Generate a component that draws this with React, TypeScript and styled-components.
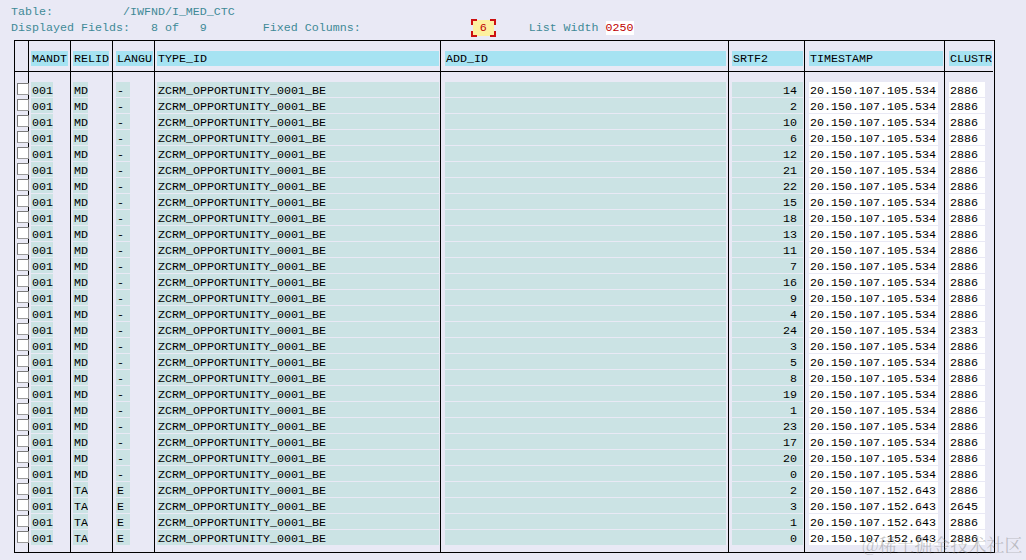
import React from "react";
import styled, { createGlobalStyle } from "styled-components";

const Global = createGlobalStyle`
  html, body { margin: 0; padding: 0; background: #e9e9f5; }
  body { font-family: "Liberation Mono", "DejaVu Sans Mono", monospace; }
`;

const Page = styled.div`
  position: relative;
  width: 1026px;
  height: 560px;
  overflow: hidden;
  background: #e9e9f5;
`;

const Info = styled.div`
  padding: 4px 0 0 11px;
  height: 37px;
  box-sizing: border-box;
  font-size: 11.67px;
  color: #3f8997;
`;

const InfoLine = styled.div`
  height: 16px;
  line-height: 16px;
  white-space: pre;
  display: flex;
  align-items: center;
`;

const FixedBox = styled.span`
  position: relative;
  display: inline-block;
  width: 21px;
  height: 16px;
  line-height: 17px;
  background: #fdf0a0;
  color: #c00000;
  text-align: center;
`;

const Brackets = styled.svg`
  position: absolute;
  left: -2px;
  top: -1px;
  width: 25px;
  height: 18px;
  overflow: visible;
  pointer-events: none;
`;

const WidthValue = styled.span`
  background: #ffffff;
  color: #c00000;
  height: 14px;
  line-height: 15px;
`;

const Table = styled.div`
  margin-left: 14px;
  margin-top: 3px;
  width: 981px;
  height: 513px;
  box-sizing: border-box;
  border: 1px solid #000;
  display: flex;
`;

const Column = styled.div<{ $w: number; $last?: boolean }>`
  width: ${(p) => p.$w}px;
  flex: none;
  display: flex;
  flex-direction: column;
  border-right: ${(p) => (p.$last ? "none" : "1px solid #000")};
  font-size: 11.67px;
  color: #000;
`;

const HeadArea = styled.div<{ $pad: number }>`
  height: 31px;
  padding: 10px 0 0 ${(p) => p.$pad}px;
  box-sizing: border-box;
  border-bottom: 1px solid #000;
`;

const HeadCell = styled.div<{ $w: number }>`
  width: ${(p) => p.$w}px;
  height: 15px;
  line-height: 13px;
  padding: 2px 0 0 1px;
  background: #a6e3f2;
  box-sizing: border-box;
  white-space: pre;
  overflow: hidden;
`;

const BodyArea = styled.div<{ $pad: number }>`
  padding: 10px 0 0 ${(p) => p.$pad}px;
  display: flex;
  flex-direction: column;
  gap: 1px;
`;

const Cell = styled.div<{ $w: number; $white?: boolean; $right?: boolean }>`
  width: ${(p) => p.$w}px;
  height: 15px;
  line-height: 12px;
  background: ${(p) => (p.$white ? "#ffffff" : "#cbe3e4")};
  padding: 3px ${(p) => (p.$right ? 6 : 0)}px 0 1px;
  box-sizing: border-box;
  text-align: ${(p) => (p.$right ? "right" : "left")};
  white-space: pre;
  overflow: hidden;
`;

const Check = styled.div`
  width: 12px;
  height: 12px;
  margin-bottom: 4px;
  box-sizing: border-box;
  background: #ffffff;
  border-top: 1px solid #7a7a7a;
  border-left: 1px solid #7a7a7a;
  border-right: 1px solid #9a9a9a;
  border-bottom: 1px solid #9a9a9a;
`;

const CheckBody = styled.div`
  padding: 11px 0 0 2px;
  display: flex;
  flex-direction: column;
`;

const Watermark = styled.div`
  position: absolute;
  left: 862px;
  top: 534px;
  font-family: "Noto Serif CJK SC", "Noto Sans CJK SC", serif;
  font-size: 18px;
  line-height: 21px;
  color: rgba(120, 120, 120, 0.42);
  white-space: nowrap;
`;

type Row = { relid: string; langu: string; srtf2: number; ts: string; clustr: string };

const MDs = [14, 2, 10, 6, 12, 21, 22, 15, 18, 13, 11, 7, 16, 9, 4, 24, 3, 5, 8, 19, 1, 23, 17, 20, 0];
const rows: Row[] = [
  ...MDs.map((n) => ({
    relid: "MD",
    langu: "-",
    srtf2: n,
    ts: "20.150.107.105.534",
    clustr: n === 24 ? "2383" : "2886",
  })),
  ...[2, 3, 1, 0].map((n) => ({
    relid: "TA",
    langu: "E",
    srtf2: n,
    ts: "20.150.107.152.643",
    clustr: n === 3 ? "2645" : "2886",
  })),
];

type ColDef = {
  title: string;
  colW: number;
  pad: number;
  headW: number;
  cellW: number;
  white?: boolean;
  right?: boolean;
  value: (r: Row) => string;
};

const cols: ColDef[] = [
  { title: "MANDT", colW: 41, pad: 2, headW: 37, cellW: 22, value: () => "001" },
  { title: "RELID", colW: 41, pad: 2, headW: 36, cellW: 15, value: (r) => r.relid },
  { title: "LANGU", colW: 41, pad: 3, headW: 37, cellW: 14, value: (r) => r.langu },
  { title: "TYPE_ID", colW: 285, pad: 2, headW: 282, cellW: 282, value: () => "ZCRM_OPPORTUNITY_0001_BE" },
  { title: "ADD_ID", colW: 287, pad: 4, headW: 281, cellW: 281, value: () => "" },
  { title: "SRTF2", colW: 75, pad: 3, headW: 71, cellW: 71, right: true, value: (r) => String(r.srtf2) },
  { title: "TIMESTAMP", colW: 139, pad: 4, headW: 134, cellW: 129, white: true, value: (r) => r.ts },
  { title: "CLUSTR", colW: 48, pad: 4, headW: 43, cellW: 36, white: true, value: (r) => r.clustr },
];

export default function App() {
  return (
    <Page>
      <Global />
      <Info>
        <InfoLine>{"Table:          /IWFND/I_MED_CTC"}</InfoLine>
        <InfoLine>
          {"Displayed Fields:   8 of   9        Fixed Columns:                "}
          <FixedBox>
            6
            <Brackets viewBox="0 0 25 18">
              <path
                d="M1 6V1H6M19 1H24V6M24 12V17H19M6 17H1V12"
                fill="none"
                stroke="#cc1010"
                strokeWidth="2"
              />
            </Brackets>
          </FixedBox>
          {"     List Width "}
          <WidthValue>0250</WidthValue>
        </InfoLine>
      </Info>
      <Table>
        <Column $w={13}>
          <HeadArea $pad={0} />
          <CheckBody>
            {rows.map((_, i) => (
              <Check key={i} />
            ))}
          </CheckBody>
        </Column>
        {cols.map((c, ci) => (
          <Column key={c.title} $w={c.colW} $last={ci === cols.length - 1}>
            <HeadArea $pad={c.pad}>
              <HeadCell $w={c.headW}>{c.title}</HeadCell>
            </HeadArea>
            <BodyArea $pad={c.pad}>
              {rows.map((r, i) => (
                <Cell key={i} $w={c.cellW} $white={c.white} $right={c.right}>
                  {c.value(r)}
                </Cell>
              ))}
            </BodyArea>
          </Column>
        ))}
      </Table>
      <Watermark>@稀土掘金技术社区</Watermark>
    </Page>
  );
}
